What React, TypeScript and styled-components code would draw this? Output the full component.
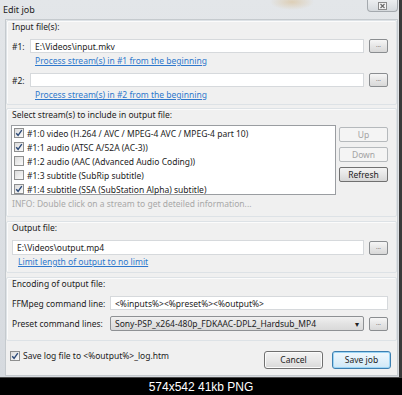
import React from 'react'
import styled, { createGlobalStyle } from 'styled-components'

const GlobalStyle = createGlobalStyle`
  html, body {
    margin: 0;
    padding: 0;
    background: #000;
  }
  body {
    font-family: "Noto Sans", "Open Sans", sans-serif;
    font-size: 8.5px;
    color: #1c1c1c;
  }
`

type Stream = { label: string; checked: boolean }

const streams: Stream[] = [
  { label: '#1:0 video (H.264 / AVC / MPEG-4 AVC / MPEG-4 part 10)', checked: true },
  { label: '#1:1 audio (ATSC A/52A (AC-3))', checked: true },
  { label: '#1:2 audio (AAC (Advanced Audio Coding))', checked: false },
  { label: '#1:3 subtitle (SubRip subtitle)', checked: false },
  { label: '#1:4 subtitle (SSA (SubStation Alpha) subtitle)', checked: true },
]

const CheckBox = ({ checked }: { checked: boolean }) => (
  <Box>
    {checked && (
      <svg width="8" height="8" viewBox="0 0 8 8">
        <path d="M1.2 4.2 L3.1 6.3 L6.8 1.2" fill="none" stroke="#2c4a78" strokeWidth="1.4" />
      </svg>
    )}
  </Box>
)

const App = () => {
  return (
    <Page>
      <GlobalStyle />
      <Window>
        <TitleBar>
          <Title>Edit job</Title>
          <CloseButton>
            <svg width="9" height="8" viewBox="0 0 9 8">
              <rect x="0.5" y="0.5" width="8" height="7" fill="#f4f4f4" stroke="#8a8a8a" />
              <path d="M2.5 2 L6.5 6 M6.5 2 L2.5 6" stroke="#6a6a6a" strokeWidth="1.2" />
            </svg>
          </CloseButton>
        </TitleBar>
        <Client>
          <Group $height={85}>
            <Legend>Input file(s):</Legend>
            <FileRow $top={7}>
              <RowLabel $width={18}>#1:</RowLabel>
              <TextBox>E:\Videos\input.mkv</TextBox>
              <BrowseButton>...</BrowseButton>
            </FileRow>
            <LinkRow $indent={23}>
              <Link>Process stream(s) in #1 from the beginning</Link>
            </LinkRow>
            <FileRow $top={6}>
              <RowLabel $width={18}>#2:</RowLabel>
              <TextBox />
              <BrowseButton>...</BrowseButton>
            </FileRow>
            <LinkRow $indent={23}>
              <Link>Process stream(s) in #2 from the beginning</Link>
            </LinkRow>
          </Group>

          <Group $height={109} $gap={3}>
            <Legend>Select stream(s) to include in output file:</Legend>
            <StreamArea>
              <StreamList>
                {streams.map((s) => (
                  <StreamRow key={s.label}>
                    <CheckBox checked={s.checked} />
                    <span>{s.label}</span>
                  </StreamRow>
                ))}
              </StreamList>
              <SideButtons>
                <SideButton disabled>Up</SideButton>
                <SideButton disabled>Down</SideButton>
                <SideButton>Refresh</SideButton>
              </SideButtons>
            </StreamArea>
            <Info>INFO: Double click on a stream to get deteiled information...</Info>
          </Group>

          <Group $height={52} $gap={4}>
            <Legend>Output file:</Legend>
            <FileRow $top={7} $height={15}>
              <TextBox>E:\Videos\output.mp4</TextBox>
              <BrowseButton>...</BrowseButton>
            </FileRow>
            <LinkRow $indent={6} $top={1}>
              <Link>Limit length of output to no limit</Link>
            </LinkRow>
          </Group>

          <Group $height={64} $gap={4}>
            <Legend>Encoding of output file:</Legend>
            <FileRow $top={7}>
              <RowLabel $width={98}>FFMpeg command line:</RowLabel>
              <TextBox>&lt;%inputs%&gt;&lt;%preset%&gt;&lt;%output%&gt;</TextBox>
            </FileRow>
            <FileRow $top={6} $height={15}>
              <RowLabel $width={98}>Preset command lines:</RowLabel>
              <Select>
                <span>Sony-PSP_x264-480p_FDKAAC-DPL2_Hardsub_MP4</span>
                <Arrow>▾</Arrow>
              </Select>
              <BrowseButton>...</BrowseButton>
            </FileRow>
          </Group>

          <Footer>
            <CheckLabel>
              <CheckBox checked />
              <span>Save log file to &lt;%output%&gt;_log.htm</span>
            </CheckLabel>
            <FooterButtons>
              <DialogButton>Cancel</DialogButton>
              <DialogButton $primary>Save job</DialogButton>
            </FooterButtons>
          </Footer>
        </Client>
      </Window>
      <Caption>574x542 41kb PNG</Caption>
    </Page>
  )
}

const Page = styled.div`
  width: 402px;
  height: 395px;
  display: flex;
  flex-direction: column;
  overflow: hidden;
  background: #000;
`

const Window = styled.div`
  height: 378px;
  flex-shrink: 0;
  display: flex;
  flex-direction: column;
  background: linear-gradient(180deg, #e3e6e9 0%, #d6dadf 100%);
  border-right: 3px solid #3a3a3a;
  border-bottom: 1px solid #4a4a4a;
  box-sizing: border-box;
  padding: 0 1px 1px 5px;
`

const TitleBar = styled.div`
  height: 19px;
  flex-shrink: 0;
  display: flex;
  align-items: flex-start;
  justify-content: space-between;
  margin-left: -5px;
  background: radial-gradient(ellipse 22px 8px at 292px 2px, rgba(214, 178, 120, 0.45), transparent);
`

const Title = styled.div`
  padding: 3px 0 0 3px;
  font-size: 9px;
  color: #222;
`

const CloseButton = styled.div`
  width: 31px;
  height: 12px;
  display: flex;
  align-items: center;
  justify-content: center;
  background: linear-gradient(180deg, #eceef0, #d5d9dd);
  border: 1px solid #a4a9ae;
  border-top: none;
  border-radius: 0 0 4px 4px;
  box-sizing: border-box;
`

const Client = styled.div`
  flex: 1;
  display: flex;
  flex-direction: column;
  background: #f0f0f0;
  border: 1px solid #c5cace;
`

const Group = styled.div<{ $height: number; $gap?: number }>`
  height: ${(p) => p.$height}px;
  flex-shrink: 0;
  margin-top: ${(p) => p.$gap ?? 0}px;
  display: flex;
  flex-direction: column;
  border: 1px solid #dde2e6;
  box-shadow: inset 1px 1px 0 #fbfbfb;
  border-radius: 2px;
  padding: 0 8px 0 5px;
  box-sizing: border-box;
`

const Legend = styled.div`
  height: 11px;
  line-height: 11px;
`

const FileRow = styled.div<{ $top: number; $height?: number }>`
  display: flex;
  align-items: center;
  gap: 5px;
  margin-top: ${(p) => p.$top}px;
  height: ${(p) => p.$height ?? 14}px;
`

const RowLabel = styled.div<{ $width: number }>`
  width: ${(p) => p.$width}px;
  margin-right: -5px;
  flex-shrink: 0;
`

const TextBox = styled.div`
  flex: 1;
  height: 100%;
  display: flex;
  align-items: center;
  background: #fff;
  border: 1px solid #d6d9dc;
  box-sizing: border-box;
  padding: 0 4px;
  white-space: nowrap;
  overflow: hidden;
`

const BrowseButton = styled.div`
  width: 19px;
  height: 14px;
  flex-shrink: 0;
  border: 1px solid #8a8d90;
  border-radius: 2px;
  box-sizing: border-box;
  background: linear-gradient(180deg, #f6f6f6 0%, #e6e6e6 50%, #d8d8d8 100%);
  font-size: 6px;
  color: #555;
  text-align: center;
  line-height: 10px;
`

const LinkRow = styled.div<{ $indent: number; $top?: number }>`
  height: 12px;
  line-height: 12px;
  margin-top: ${(p) => p.$top ?? 2}px;
  padding-left: ${(p) => p.$indent}px;
`

const Link = styled.span`
  color: #2f78cc;
  text-decoration: underline;
`

const StreamArea = styled.div`
  display: flex;
  gap: 3px;
  margin-top: 5px;
  margin-left: -1px;
`

const StreamList = styled.div`
  flex: 1;
  height: 70px;
  background: #fff;
  border: 1px solid #9a9da1;
  box-sizing: border-box;
  padding: 0 2px;
`

const StreamRow = styled.div`
  height: 14px;
  display: flex;
  align-items: center;
  gap: 3px;
  white-space: nowrap;
`

const Box = styled.span`
  width: 10px;
  height: 10px;
  flex-shrink: 0;
  display: inline-flex;
  align-items: center;
  justify-content: center;
  border: 1px solid #8e8f8f;
  box-sizing: border-box;
  background: linear-gradient(135deg, #dcdcdc, #fafafa);
`

const SideButtons = styled.div`
  width: 49px;
  display: flex;
  flex-direction: column;
  gap: 5px;
  padding-top: 2px;
`

const SideButton = styled.div<{ disabled?: boolean }>`
  height: 15px;
  line-height: 13px;
  text-align: center;
  box-sizing: border-box;
  border-radius: 2px;
  border: 1px solid ${(p) => (p.disabled ? '#b5b9bc' : '#707070')};
  color: ${(p) => (p.disabled ? '#a3a3a3' : '#1c1c1c')};
  background: ${(p) =>
    p.disabled ? '#f4f4f4' : 'linear-gradient(180deg, #f3f3f3 0%, #e6e6e6 50%, #d6d6d6 100%)'};
`

const Info = styled.div`
  margin-top: 3px;
  color: #a8a8a8;
  height: 12px;
  line-height: 12px;
`

const Select = styled.div`
  flex: 1;
  height: 100%;
  display: flex;
  align-items: center;
  justify-content: space-between;
  border: 1px solid #8e9194;
  border-radius: 2px;
  box-sizing: border-box;
  padding: 0 4px;
  background: linear-gradient(180deg, #f1f1f1 0%, #e3e3e3 50%, #d9d9d9 100%);
  white-space: nowrap;
`

const Arrow = styled.span`
  font-size: 8px;
  color: #222;
`

const Footer = styled.div`
  flex: 1;
  display: flex;
  align-items: flex-start;
  justify-content: space-between;
  padding: 9px 6px 0 4px;
`

const CheckLabel = styled.div`
  display: flex;
  align-items: center;
  gap: 3px;
  height: 11px;
`

const FooterButtons = styled.div`
  display: flex;
  gap: 9px;
  margin-top: 1px;
`

const DialogButton = styled.div<{ $primary?: boolean }>`
  width: 59px;
  height: 18px;
  line-height: 16px;
  text-align: center;
  box-sizing: border-box;
  border-radius: 3px;
  border: 1px solid ${(p) => (p.$primary ? '#3c7fb1' : '#707070')};
  box-shadow: ${(p) => (p.$primary ? 'inset 0 0 0 1px #9cd5f5' : 'inset 0 0 0 1px #fbfbfb')};
  background: ${(p) =>
    p.$primary
      ? 'linear-gradient(180deg, #f0f8fd 0%, #e1f1fb 50%, #cfe8f7 100%)'
      : 'linear-gradient(180deg, #f3f3f3 0%, #e8e8e8 50%, #d8d8d8 100%)'};
`

const Caption = styled.div`
  flex: 1;
  display: flex;
  align-items: center;
  justify-content: center;
  color: #fff;
  font-family: "Liberation Sans", Arial, sans-serif;
  font-size: 12px;
  padding-top: 1px;
`

export default App
